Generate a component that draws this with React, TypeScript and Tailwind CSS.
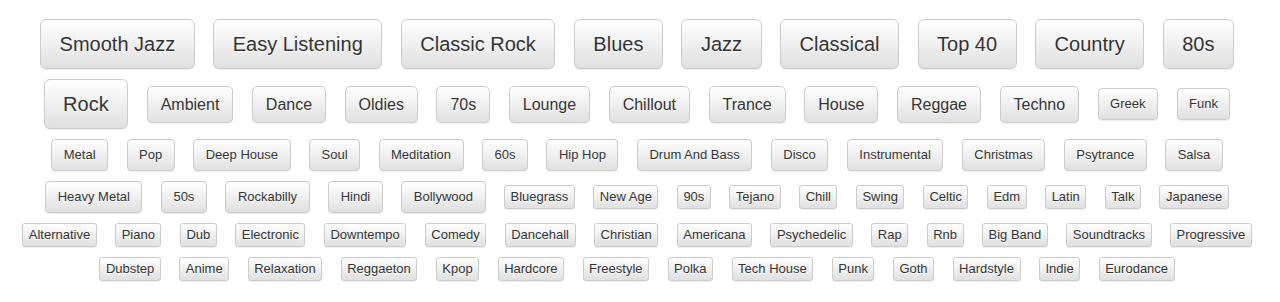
import React from "react";

type Size = "xl" | "lg" | "md" | "sm";

const sizeClass: Record<Size, string> = {
  xl: "text-[20px] leading-[24px] px-[18.5px] py-[12px] rounded-[6px]",
  lg: "text-[16px] leading-[21px] px-[13px] py-[7px] rounded-[5px]",
  md: "text-[13px] leading-[18px] px-[11.5px] py-[6px] rounded-[4px]",
  sm: "text-[13px] leading-[18px] px-[5.5px] py-[2px] rounded-[3px]",
};

// each row: [label, size]
const rows: [string, Size][][] = [
  [
    ["Smooth Jazz", "xl"],
    ["Easy Listening", "xl"],
    ["Classic Rock", "xl"],
    ["Blues", "xl"],
    ["Jazz", "xl"],
    ["Classical", "xl"],
    ["Top 40", "xl"],
    ["Country", "xl"],
    ["80s", "xl"],
  ],
  [
    ["Rock", "xl"],
    ["Ambient", "lg"],
    ["Dance", "lg"],
    ["Oldies", "lg"],
    ["70s", "lg"],
    ["Lounge", "lg"],
    ["Chillout", "lg"],
    ["Trance", "lg"],
    ["House", "lg"],
    ["Reggae", "lg"],
    ["Techno", "lg"],
    ["Greek", "md"],
    ["Funk", "md"],
  ],
  [
    ["Metal", "md"],
    ["Pop", "md"],
    ["Deep House", "md"],
    ["Soul", "md"],
    ["Meditation", "md"],
    ["60s", "md"],
    ["Hip Hop", "md"],
    ["Drum And Bass", "md"],
    ["Disco", "md"],
    ["Instrumental", "md"],
    ["Christmas", "md"],
    ["Psytrance", "md"],
    ["Salsa", "md"],
  ],
  [
    ["Heavy Metal", "md"],
    ["50s", "md"],
    ["Rockabilly", "md"],
    ["Hindi", "md"],
    ["Bollywood", "md"],
    ["Bluegrass", "sm"],
    ["New Age", "sm"],
    ["90s", "sm"],
    ["Tejano", "sm"],
    ["Chill", "sm"],
    ["Swing", "sm"],
    ["Celtic", "sm"],
    ["Edm", "sm"],
    ["Latin", "sm"],
    ["Talk", "sm"],
    ["Japanese", "sm"],
  ],
  [
    ["Alternative", "sm"],
    ["Piano", "sm"],
    ["Dub", "sm"],
    ["Electronic", "sm"],
    ["Downtempo", "sm"],
    ["Comedy", "sm"],
    ["Dancehall", "sm"],
    ["Christian", "sm"],
    ["Americana", "sm"],
    ["Psychedelic", "sm"],
    ["Rap", "sm"],
    ["Rnb", "sm"],
    ["Big Band", "sm"],
    ["Soundtracks", "sm"],
    ["Progressive", "sm"],
  ],
  [
    ["Dubstep", "sm"],
    ["Anime", "sm"],
    ["Relaxation", "sm"],
    ["Reggaeton", "sm"],
    ["Kpop", "sm"],
    ["Hardcore", "sm"],
    ["Freestyle", "sm"],
    ["Polka", "sm"],
    ["Tech House", "sm"],
    ["Punk", "sm"],
    ["Goth", "sm"],
    ["Hardstyle", "sm"],
    ["Indie", "sm"],
    ["Eurodance", "sm"],
  ],
];

function GenreButton({ label, size }: { label: string; size: Size }) {
  return (
    <button
      className={
        "shrink-0 whitespace-nowrap border border-[#ccc] bg-linear-to-b from-white to-[#e0e0e0] text-[#333] [text-shadow:0_1px_0_#fff] shadow-[inset_0_1px_0_rgba(255,255,255,0.15),0_1px_1px_rgba(0,0,0,0.075)] " +
        sizeClass[size]
      }>
      {label}
    </button>
  );
}

export default function App() {
  return (
    <div className="w-[1280px] h-[302px] bg-white overflow-hidden font-['Liberation_Sans',Arial,sans-serif] pt-[19px] pr-[6px] flex flex-col gap-y-[10px]">
      {rows.map((row, i) => (
        <div key={i} className="flex justify-center items-center gap-x-[18.5px]">
          {row.map(([label, size]) => (
            <GenreButton key={label} label={label} size={size} />
          ))}
        </div>
      ))}
    </div>
  );
}
